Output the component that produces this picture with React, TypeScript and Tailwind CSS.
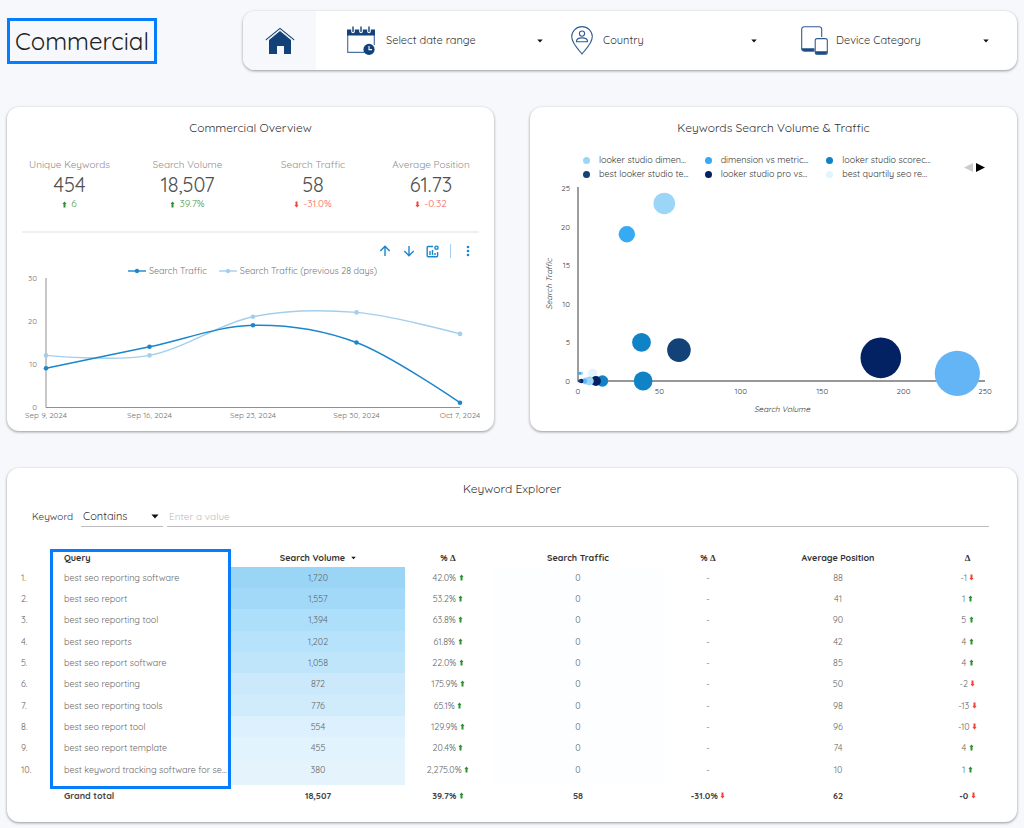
import { useState } from "react";

const trafficSeries = [9, 14, 19, 15, 1];
const previousSeries = [12, 12, 21, 22, 17];
const dates = ["Sep 9, 2024", "Sep 16, 2024", "Sep 23, 2024", "Sep 30, 2024", "Oct 7, 2024"];

const metrics = [
  { label: "Unique Keywords", value: "454", delta: "6", up: true },
  { label: "Search Volume", value: "18,507", delta: "39.7%", up: true },
  { label: "Search Traffic", value: "58", delta: "-31.0%", up: false },
  { label: "Average Position", value: "61.73", delta: "-0.32", up: false },
];

const bubbleLegend = [
  { label: "looker studio dimen...", color: "bg-[#9bd5f7]" },
  { label: "dimension vs metric...", color: "bg-[#36aaf2]" },
  { label: "looker studio scorec...", color: "bg-[#1083c6]" },
  { label: "best looker studio te...", color: "bg-[#124277]" },
  { label: "looker studio pro vs...", color: "bg-[#032263]" },
  { label: "best quartily seo re...", color: "bg-[#e1f5fe]" },
];

const bubbles = [
  { x: 233, y: 1, r: 22.6, color: "#64b5f6" },
  { x: 186, y: 3, r: 20.3, color: "#032263" },
  { x: 53, y: 23, r: 10.8, color: "#9bd5f7" },
  { x: 30, y: 19, r: 8.2, color: "#36aaf2" },
  { x: 39, y: 5, r: 9.4, color: "#1083c6" },
  { x: 62, y: 4, r: 11.8, color: "#124277" },
  { x: 40, y: 0, r: 9.4, color: "#1083c6" },
  { x: 9, y: 1, r: 4.6, color: "#e1f5fe" },
  { x: 15, y: 0, r: 5.8, color: "#1083c6" },
  { x: 11, y: 0, r: 5, color: "#032263" },
  { x: 7, y: 0, r: 4.4, color: "#9bd5f7" },
  { x: 5, y: 0, r: 3.4, color: "#9bd5f7" },
  { x: 4, y: 0, r: 2.6, color: "#64b5f6" },
  { x: 2, y: 0, r: 2.2, color: "#032263" },
  { x: 1, y: 0, r: 1.6, color: "#124277" },
  { x: 2, y: 1, r: 1.8, color: "#9bd5f7" },
  { x: 1, y: 1, r: 1.5, color: "#36aaf2" },
];

const rows = [
  { query: "best seo reporting software", volume: "1,720", heat: "bg-[#9bd5f6]", change: "42.0%", position: "88", diff: -1 },
  { query: "best seo report", volume: "1,557", heat: "bg-[#a3d9f8]", change: "53.2%", position: "41", diff: 1 },
  { query: "best seo reporting tool", volume: "1,394", heat: "bg-[#addefa]", change: "63.8%", position: "90", diff: 5 },
  { query: "best seo reports", volume: "1,202", heat: "bg-[#b7e2fb]", change: "61.8%", position: "42", diff: 4 },
  { query: "best seo report software", volume: "1,058", heat: "bg-[#bfe5fb]", change: "22.0%", position: "85", diff: 4 },
  { query: "best seo reporting", volume: "872", heat: "bg-[#cbe9fb]", change: "175.9%", position: "50", diff: -2 },
  { query: "best seo reporting tools", volume: "776", heat: "bg-[#d0ebfc]", change: "65.1%", position: "98", diff: -13 },
  { query: "best seo report tool", volume: "554", heat: "bg-[#dcf0fd]", change: "129.9%", position: "96", diff: -10 },
  { query: "best seo report template", volume: "455", heat: "bg-[#e1f3fd]", change: "20.4%", position: "74", diff: 4 },
  { query: "best keyword tracking software for se...", volume: "380", heat: "bg-[#e5f3fd]", change: "2,275.0%", position: "10", diff: 1 },
];

type Point = { x: number; y: number };

// Catmull-Rom spline written as cubic beziers
function smoothPath(p: Point[]) {
  let d = `M${p[0].x} ${p[0].y}`;
  for (let i = 0; i < p.length - 1; i++) {
    const before = p[i - 1];
    const a = p[i];
    const b = p[i + 1];
    const after = p[i + 2];
    const c1 = before ? { x: a.x + (b.x - before.x) / 6, y: a.y + (b.y - before.y) / 6 } : a;
    const c2 = after ? { x: b.x - (after.x - a.x) / 6, y: b.y - (after.y - a.y) / 6 } : b;
    d += ` C${c1.x} ${c1.y} ${c2.x} ${c2.y} ${b.x} ${b.y}`;
  }
  return d;
}

function Trend({ up }: { up: boolean }) {
  return (
    <svg viewBox="0 0 5 7" className="inline-block h-[7px] w-[5px] shrink-0 align-baseline" aria-label={up ? "up" : "down"}>
      {up ? (
        <path d="M2.5 .4 4.6 3H3.5V6.4h-2V3H.4Z" fill="#2e8f33" />
      ) : (
        <path d="M2.5 6.6 4.6 4H3.5V.6h-2V4H.4Z" fill="#f44336" />
      )}
    </svg>
  );
}

function Caret({ className }: { className: string }) {
  return (
    <svg viewBox="0 0 10 6" className={className} aria-hidden="true">
      <path d="M0.5 0.5h9L5 5.5Z" fill="#111" />
    </svg>
  );
}

function Delta() {
  return <span className="font-['Liberation_Serif',serif]">Δ</span>;
}

function HomeIcon() {
  return (
    <svg viewBox="0 0 30 28" className="h-[28px] w-[30px]" aria-hidden="true">
      <path d="M4 13 15 4l11 9v14h-7v-8h-7v8H4Z" fill="#124277" />
      <path d="M1.2 12.6 15 1.4l13.8 11.2" fill="none" stroke="#124277" strokeWidth="1.2" strokeLinecap="round" />
      <path d="M2.6 13 15 3l12.4 10" fill="none" stroke="#dfe6ee" strokeWidth="0.8" />
    </svg>
  );
}

function CalendarIcon() {
  return (
    <svg viewBox="0 0 28 30" className="h-[30px] w-[28px] shrink-0" aria-hidden="true">
      <path d="M.7 4v22.3h17" fill="none" stroke="#4c74a3" strokeWidth="1.2" />
      <path d="M27.3 9v10" stroke="#4c74a3" strokeWidth="1.2" />
      <path d="M0 3.5h28v6H0Z" fill="#124277" />
      {[6, 14, 22].map((x) => (
        <g key={x}>
          <path d={`M${x} 1.5v4`} stroke="#fff" strokeWidth="3.6" strokeLinecap="round" />
          <path d={`M${x} 1v4.5`} stroke="#124277" strokeWidth="1.4" strokeLinecap="round" />
        </g>
      ))}
      <circle cx="22" cy="23.4" r="5.6" fill="#124277" />
      <path d="M22 20v3.6h3" fill="none" stroke="#fff" strokeWidth="1.1" />
    </svg>
  );
}

function PinIcon() {
  return (
    <svg viewBox="0 0 22 29" className="h-[29px] w-[22px] shrink-0" fill="none" stroke="#2f5d92" strokeWidth="1.1" aria-hidden="true">
      <path d="M11 28C8.6 24.5.7 18 .7 10.6a10.3 10 0 0 1 20.6 0C21.3 18 13.4 24.5 11 28Z" />
      <circle cx="11" cy="7.6" r="2.6" />
      <path d="M5.4 15.8c0-5.2 11.2-5.2 11.2 0Z" strokeLinejoin="round" />
    </svg>
  );
}

function DevicesIcon() {
  return (
    <svg viewBox="0 0 27 29" className="h-[29px] w-[27px] shrink-0" fill="none" stroke="#2f5d92" strokeWidth="1.1" aria-hidden="true">
      <path d="M13 25H3.2A2.5 2.5 0 0 1 .7 22.5V3.2A2.5 2.5 0 0 1 3.2.7h15a2.5 2.5 0 0 1 2.5 2.5V11" />
      <path d="M1 22.8h12V25H3.2A2.5 2.5 0 0 1 1 22.8Z" fill="#124277" />
      <rect x="14.2" y="12.6" width="12.1" height="15.6" rx="2" />
      <path d="M14.5 25.8h11.6c0 1.5-.8 2.2-2 2.2h-7.6c-1.2 0-2-.7-2-2.2Z" fill="#124277" />
    </svg>
  );
}

function TrafficChart() {
  const toPoints = (values: number[]) => values.map((v, i) => ({ x: 39 + i * 103.5, y: 133 - v * 4.3 }));
  const series = [
    { points: toPoints(previousSeries), color: "#a3cfec" },
    { points: toPoints(trafficSeries), color: "#1a86cc" },
  ];
  return (
    <svg viewBox="0 3 487 154" className="w-full overflow-visible text-[8px]" role="img" aria-label="Search traffic over time">
      {[30, 20, 10, 0].map((tick) => (
        <text key={tick} x="30" y={136 - tick * 4.3} textAnchor="end" fill="#757575">
          {tick}
        </text>
      ))}
      <path d="M39 4V133.5H453" fill="none" stroke="#8f8f8f" />
      {series.map((s) => (
        <g key={s.color}>
          <path d={smoothPath(s.points)} fill="none" stroke={s.color} strokeWidth="1.4" />
          {s.points.map((p) => (
            <circle key={p.x} cx={p.x} cy={p.y} r="2.3" fill={s.color} />
          ))}
        </g>
      ))}
      {dates.map((date, i) => (
        <text key={date} x={39 + i * 103.5} y="144" textAnchor="middle" fill="#757575">
          {date}
        </text>
      ))}
    </svg>
  );
}

function BubbleChart() {
  return (
    <svg viewBox="0 0 487 240" className="w-full text-[8px]" role="img" aria-label="Search traffic by search volume">
      {[25, 20, 15, 10, 5, 0].map((tick) => (
        <text key={tick} x="40" y={203 - tick * 7.72} textAnchor="end" fill="#444">
          {tick}
        </text>
      ))}
      {[0, 50, 100, 150, 200, 250].map((tick) => (
        <text key={tick} x={48 + tick * 1.628} y="213" textAnchor="middle" fill="#444">
          {tick}
        </text>
      ))}
      <path d="M48 6V200H455" fill="none" stroke="#757575" strokeWidth="1.4" />
      {bubbles.map((b, i) => (
        <circle key={i} cx={48 + b.x * 1.628} cy={200 - b.y * 7.72} r={b.r} fill={b.color} />
      ))}
      <text x="252" y="231" textAnchor="middle" fontStyle="italic" fill="#333">
        Search Volume
      </text>
      <text transform="translate(22 103) rotate(-90)" textAnchor="middle" fontStyle="italic" fill="#333">
        Search Traffic
      </text>
    </svg>
  );
}

export default function App() {
  const [operator, setOperator] = useState("Contains");
  const [keyword, setKeyword] = useState("");

  const card = "rounded-xl bg-white shadow-[0_1px_3px_rgba(0,0,0,0.4)]";
  const cardTitle = "pt-3 text-center text-xs leading-[18px]";

  return (
    <main className="min-h-screen bg-[#f6f8fb] px-[7px] pt-[11px] pb-[6px] font-['Quicksand','Lato',sans-serif] text-[#333]">
      {/* HEADER */}
      <header className="flex items-center">
        <h1 className="flex h-[46px] w-[150px] shrink-0 items-center justify-center border-3 border-[#067dff] text-2xl text-[#222]">
          Commercial
        </h1>
        <nav className="ml-[86px] flex h-[59px] flex-1 overflow-hidden rounded-xl bg-white shadow-[0_1px_3px_rgba(0,0,0,0.4)]">
          <a href="#" aria-label="Home" className="flex w-[73px] shrink-0 items-center justify-center bg-[#f6f8fb]">
            <HomeIcon />
          </a>
          <div className="grid flex-1 grid-cols-[241fr_214fr_246fr] text-[11px]">
            <button className="flex items-center gap-[11px] pr-[14px] pl-[31px] text-left">
              <CalendarIcon />
              <span className="flex-1">Select date range</span>
              <Caret className="h-1 w-[6px]" />
            </button>
            <label className="flex items-center gap-[10px] px-[14px]">
              <PinIcon />
              <select aria-label="Country" className="min-w-0 flex-1 appearance-none outline-none">
                <option>Country</option>
              </select>
              <Caret className="h-1 w-[6px]" />
            </label>
            <label className="flex items-center gap-2 pr-7 pl-[30px]">
              <DevicesIcon />
              <select aria-label="Device Category" className="min-w-0 flex-1 appearance-none outline-none">
                <option>Device Category</option>
              </select>
              <Caret className="h-1 w-[6px]" />
            </label>
          </div>
        </nav>
      </header>

      <div className="mt-[37px] grid grid-cols-2 gap-9">
        {/* OVERVIEW */}
        <section className={card}>
          <h2 className={cardTitle}>Commercial Overview</h2>
          <div className="mt-5 grid grid-cols-[119fr_117fr_134fr_102fr] pr-3 pl-[3px] text-center">
            {metrics.map((m) => (
              <div key={m.label}>
                <div className="text-[10px] leading-4 whitespace-nowrap text-[#8e8e8e]">{m.label}</div>
                <div className="text-xl leading-6 text-[#505050]">{m.value}</div>
                <div className={`flex items-center justify-center gap-1 text-[10px] leading-[14px] ${m.up ? "text-[#4a9e4e]" : "text-[#f4685e]"}`}>
                  <Trend up={m.up} />
                  {m.delta}
                </div>
              </div>
            ))}
          </div>
          <hr className="mx-[15px] mt-5 border-t-2 border-[#eeeff0]" />
          {/* Chart toolbar */}
          <div className="mt-[11px] flex items-center justify-end pr-6 text-[#1a86cc]">
            <button aria-label="Drill up">
              <svg viewBox="0 0 12 12" className="size-3" fill="none" stroke="currentColor" strokeWidth="1.4">
                <path d="M6 11V1.5M1.3 6 6 1.3 10.7 6" />
              </svg>
            </button>
            <button aria-label="Drill down" className="ml-3">
              <svg viewBox="0 0 12 12" className="size-3" fill="none" stroke="currentColor" strokeWidth="1.4">
                <path d="M6 1v9.5M1.3 6 6 10.7 10.7 6" />
              </svg>
            </button>
            <button aria-label="Change chart" className="ml-[11px]">
              <svg viewBox="0 0 13 13" className="size-[13px]" fill="none" stroke="currentColor" strokeWidth="1.4">
                <path d="M7 1.5H2.2a1 1 0 0 0-1 1v8.3a1 1 0 0 0 1 1h8.4a1 1 0 0 0 1-1V7" />
                <path d="M4 10V6M6.5 10V5M9 10V8" />
                <circle cx="10.5" cy="2.7" r="1.6" />
              </svg>
            </button>
            <span className="ml-[11px] h-[14px] w-px bg-[#a3cfec]" />
            <button aria-label="More options" className="ml-[15px]">
              <svg viewBox="0 0 4 12" className="h-3 w-1" fill="currentColor">
                <circle cx="2" cy="2" r="1.3" />
                <circle cx="2" cy="6" r="1.3" />
                <circle cx="2" cy="10" r="1.3" />
              </svg>
            </button>
          </div>
          {/* Chart legend */}
          <div className="mt-[7px] flex justify-center gap-3 pl-1 text-[9px] leading-3 text-[#757575]">
            <span className="flex items-center gap-[3px]">
              <svg viewBox="0 0 18 6" className="h-[6px] w-[18px]" stroke="#1a86cc" fill="#1a86cc">
                <path d="M0 3h18" strokeWidth="1.4" />
                <circle cx="9" cy="3" r="1.8" />
              </svg>
              Search Traffic
            </span>
            <span className="flex items-center gap-[3px]">
              <svg viewBox="0 0 18 6" className="h-[6px] w-[18px]" stroke="#a3cfec" fill="#a3cfec">
                <path d="M0 3h18" strokeWidth="1.4" />
                <circle cx="9" cy="3" r="1.8" />
              </svg>
              Search Traffic (previous 28 days)
            </span>
          </div>
          <TrafficChart />
        </section>

        {/* VOLUME VS TRAFFIC */}
        <section className={card}>
          <h2 className={cardTitle}>Keywords Search Volume &amp; Traffic</h2>
          <div className="mt-4 flex items-center pr-8 pl-[53px]">
            <ul className="grid flex-1 grid-cols-3 text-[9px] leading-[14px]">
              {bubbleLegend.map((item) => (
                <li key={item.label} className="flex items-center gap-[9px] whitespace-nowrap">
                  <span className={`size-[7px] rounded-full ${item.color}`} />
                  {item.label}
                </li>
              ))}
            </ul>
            <div className="ml-4 flex gap-[3px]">
              <button aria-label="Previous page" disabled>
                <svg viewBox="0 0 9 9" className="size-[9px]">
                  <path d="M9 0v9L0 4.5Z" fill="#ccc" />
                </svg>
              </button>
              <button aria-label="Next page">
                <svg viewBox="0 0 9 9" className="size-[9px]">
                  <path d="M0 0v9l9-4.5Z" fill="#000" />
                </svg>
              </button>
            </div>
          </div>
          <BubbleChart />
        </section>
      </div>

      {/* KEYWORD EXPLORER */}
      <section className={`mt-[37px] pb-[15px] ${card}`}>
        <h2 className={cardTitle}>Keyword Explorer</h2>
        <div className="mt-2 mr-7 ml-[25px] flex items-stretch text-[11px]">
          <label htmlFor="operator" className="flex h-5 w-[49px] items-center text-[10px]">
            Keyword
          </label>
          <span className="flex h-[21px] w-[82px] items-center border-b border-[#bdbdbd] pr-1 pl-[2px]">
            <select
              id="operator"
              value={operator}
              onChange={(e) => setOperator(e.target.value)}
              className="min-w-0 flex-1 appearance-none outline-none"
            >
              <option>Contains</option>
              <option>Equals</option>
              <option>Starts with</option>
            </select>
            <Caret className="h-[5px] w-2" />
          </span>
          <input
            type="text"
            aria-label="Keyword value"
            placeholder="Enter a value"
            value={keyword}
            onChange={(e) => setKeyword(e.target.value)}
            className="ml-1 h-[21px] min-w-0 flex-1 border-b border-[#bdbdbd] pl-[2px] text-[10px] outline-none placeholder:text-[#bdbdbd]"
          />
        </div>

        <div className="relative mt-[22px] pr-[7px]">
          <table className="w-full table-fixed text-center text-[9px] leading-3 text-[#666]">
            <colgroup>
              <col className="w-[46px]" />
              <col className="w-[178px]" />
              <col className="w-[174px]" />
              <col className="w-[86px]" />
              <col className="w-[174px]" />
              <col className="w-[86px]" />
              <col className="w-[174px]" />
              <col className="w-[85px]" />
            </colgroup>
            <thead>
              <tr className="h-[18px] text-[#333]">
                <th></th>
                <th className="pl-[11px] text-left">Query</th>
                <th>
                  <button className="inline-flex items-center gap-[6px]">
                    Search Volume
                    <Caret className="h-1 w-[5px]" />
                  </button>
                </th>
                <th>
                  % <Delta />
                </th>
                <th>Search Traffic</th>
                <th>
                  % <Delta />
                </th>
                <th>Average Position</th>
                <th>
                  <Delta />
                </th>
              </tr>
            </thead>
            <tbody>
              {rows.map((row, i) => (
                <tr key={row.query} className="h-[21px] nth-[3n]:h-[22px] last:h-[26px] last:[&>td]:pb-1">
                  <td className="pl-[14px] text-left">{i + 1}.</td>
                  <td className="pl-[11px] text-left whitespace-nowrap">{row.query}</td>
                  <td className={row.heat}>{row.volume}</td>
                  <td>
                    {row.change} <Trend up />
                  </td>
                  <td className="bg-[#fcfeff]">0</td>
                  <td>-</td>
                  <td>{row.position}</td>
                  <td>
                    {row.diff} <Trend up={row.diff > 0} />
                  </td>
                </tr>
              ))}
            </tbody>
            <tfoot>
              <tr className="h-[22px] font-bold text-[#444]">
                <td></td>
                <td className="pl-[11px] text-left">Grand total</td>
                <td>18,507</td>
                <td>
                  39.7% <Trend up />
                </td>
                <td>58</td>
                <td>
                  -31.0% <Trend up={false} />
                </td>
                <td>62</td>
                <td>
                  -0 <Trend up={false} />
                </td>
              </tr>
            </tfoot>
          </table>
          {/* Highlight around the query column */}
          <div className="pointer-events-none absolute top-0 bottom-[18px] left-[43px] w-[181px] border-3 border-[#067dff]" />
        </div>
      </section>
    </main>
  );
}
